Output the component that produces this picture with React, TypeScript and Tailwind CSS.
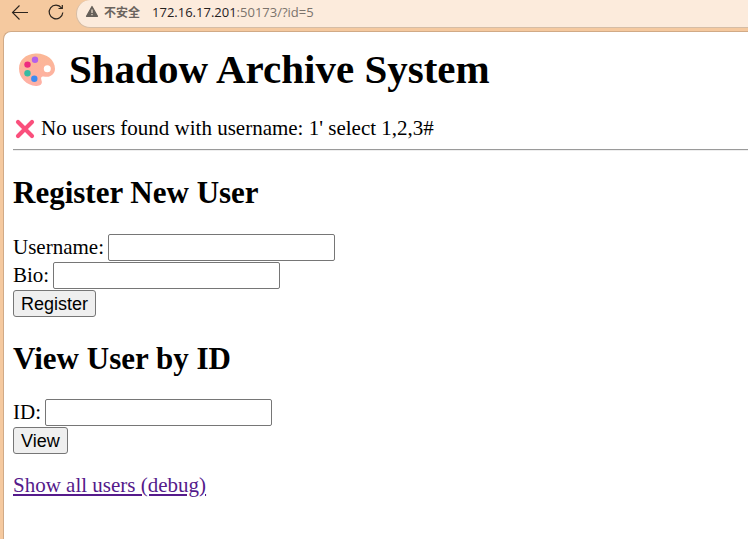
import React from 'react';

const PaletteIcon = () => (
  <svg className="w-10 h-10 shrink-0" viewBox="0 0 40 40" aria-hidden="true">
    <defs>
      <linearGradient id="palette" x1="0" y1="0" x2="0" y2="1">
        <stop offset="0" stopColor="#fbb795" />
        <stop offset="1" stopColor="#ffb0a6" />
      </linearGradient>
    </defs>
    <path
      fill="url(#palette)"
      fillRule="evenodd"
      d="M18.500 4.500C8.500 5 2 11.500 2 19.500C2 29 9.500 36.300 19 37C22.800 37.300 25.300 35.500 24.800 32.600C24.400 30 23.300 28.800 25 27.800C26.500 27 29 28.200 31.500 27.700C35.500 26.800 38 23.800 38 19.800C38 10.500 29 4 18.500 4.500ZM30.300 16.200A3.500 3.500 0 1 1 30.300 23.200A3.500 3.500 0 1 1 30.300 16.200Z"
    />
    <circle cx="18" cy="10.800" r="3.200" fill="#b560ea" />
    <circle cx="10.500" cy="15.600" r="3.200" fill="#ee2a80" />
    <circle cx="10.500" cy="24.300" r="3.200" fill="#36bba2" />
    <circle cx="17.300" cy="29.800" r="3.200" fill="#3e8bf0" />
  </svg>
);

const CrossIcon = () => (
  <svg className="w-6 h-6 shrink-0" viewBox="0 0 24 24" aria-hidden="true">
    <path d="M5 5l14 14M19 5L5 19" stroke="#fa4f7c" strokeWidth="4.200" strokeLinecap="round" />
  </svg>
);

const BrowserBar = () => (
  <header className="flex items-start h-[31px] font-['Open_Sans','Noto_Sans_CJK_SC',sans-serif]">
    <button type="button" aria-label="Back" className="w-6 h-6 ml-2 text-[#2b241e]">
      <svg className="w-6 h-6" viewBox="0 0 24 24" fill="none" stroke="currentColor" strokeWidth="1.1">
        <path d="M20 12.500H4.500M11.500 5.500L4.500 12.500L11.500 19.500" />
      </svg>
    </button>
    <button type="button" aria-label="Reload" className="w-6 h-6 ml-3 text-[#2b241e]">
      <svg className="w-6 h-6" viewBox="0 0 24 24" fill="none" stroke="currentColor" strokeWidth="1.2">
        <path d="M17.500 8A6.800 6.800 0 1 0 18.800 12.500M18.300 5V8.500H14.500" />
      </svg>
    </button>
    <div className="flex-1 flex items-start h-7 ml-2 pl-2 bg-[#fcebdc] border-b border-l border-[#d6bda5] rounded-l-[14px] text-[13px] leading-6 whitespace-nowrap">
      <svg className="w-[14px] h-[14px] mt-1" viewBox="0 0 14 14" aria-hidden="true">
        <path d="M7 2.500L12.500 12.300H1.500Z" fill="#66605a" stroke="#66605a" strokeWidth="1.200" strokeLinejoin="round" />
        <path d="M7 5.500V9M7 10V11.200" stroke="#fcebdc" strokeWidth="1.100" />
      </svg>
      <span className="ml-[5px] text-[12px] leading-[25px] font-bold text-[#6b645e]">不安全</span>
      <span className="ml-3 text-[#25211e]">172.16.17.201</span>
      <span className="text-[#7b736c]">:50173/?id=5</span>
    </div>
  </header>
);

interface FieldProps {
  id: string;
  label: string;
}

const Field: React.FC<FieldProps> = ({ id, label }) => (
  <div className="flex items-center gap-1 mb-px">
    <label htmlFor={id}>{label}</label>
    <input
      id={id}
      name={id}
      type="text"
      className="w-[227px] h-[27px] px-1 bg-white border border-[#767676] rounded-xs font-['Liberation_Sans',sans-serif] text-[18px]"
    />
  </div>
);

const SubmitButton: React.FC<{ children: React.ReactNode }> = ({ children }) => (
  <button
    type="submit"
    className="block h-[27px] px-[7px] bg-[#efefef] border border-[#767676] rounded-[3px] font-['Liberation_Sans',sans-serif] text-[18px] leading-6"
  >
    {children}
  </button>
);

export default function App() {
  return (
    <div className="min-h-screen flex flex-col bg-[#f5c99f]">
      <BrowserBar />
      <main className="flex-1 ml-[3px] pl-[9px] bg-white border-t border-l border-[#d1aa86] rounded-tl-[8px] font-['Liberation_Serif',serif] text-[21px] leading-[27px] text-black">
        <h1 className="flex items-center gap-3 pt-3 pl-1 text-[41px] leading-[50px] font-bold whitespace-nowrap">
          <PaletteIcon />
          Shadow Archive System
        </h1>
        <p className="flex items-center gap-1 mt-[21px]">
          <CrossIcon />
          No users found with username: 1' select 1,2,3#
        </p>
        <hr className="mt-[7px] border-t border-b border-t-[#9a9a9a] border-b-[#eeeeee]" />

        <h2 className="mt-6 text-[31px] leading-[36px] font-bold">Register New User</h2>
        <form className="mt-[23px]" onSubmit={(e) => e.preventDefault()}>
          <Field id="username" label="Username:" />
          <Field id="bio" label="Bio:" />
          <SubmitButton>Register</SubmitButton>
        </form>

        <h2 className="mt-6 text-[31px] leading-[36px] font-bold">View User by ID</h2>
        <form className="mt-[22px]" onSubmit={(e) => e.preventDefault()}>
          <Field id="user-id" label="ID:" />
          <SubmitButton>View</SubmitButton>
        </form>

        <p className="mt-[18px]">
          <a href="#users" className="text-[#551a8b] underline">Show all users (debug)</a>
        </p>
      </main>
    </div>
  );
}
